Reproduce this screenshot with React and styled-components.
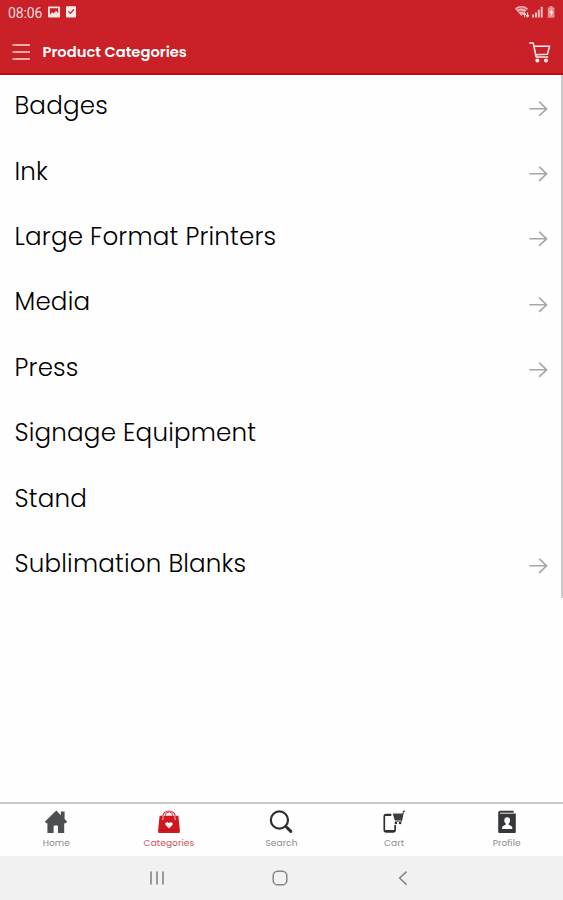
import React, { useState } from 'react'
import styled, { createGlobalStyle } from 'styled-components'

const categories = [
    { name: 'Badges', sub: true },
    { name: 'Ink', sub: true },
    { name: 'Large Format Printers', sub: true },
    { name: 'Media', sub: true },
    { name: 'Press', sub: true },
    { name: 'Signage Equipment', sub: false },
    { name: 'Stand', sub: false },
    { name: 'Sublimation Blanks', sub: true },
]

const pictureIcon = (
    <svg width="12" height="12" viewBox="0 0 12 12">
        <rect x="0" y="0.5" width="12" height="11" rx="1" fill="#fbe3e4"/>
        <path d="M1.8 2.3h8.4v5l-2.2-2.6-2.1 2.8-1.5-1.3-2.6 2.2z" fill="#c92127"/>
    </svg>
)

const checkIcon = (
    <svg width="10" height="12" viewBox="0 0 10 12">
        <rect x="0" y="0.2" width="10" height="11.4" rx="1" fill="#fdeeee"/>
        <path d="M2.4 5.4l2 2 3.4-3.9" fill="none" stroke="#c92127" strokeWidth="1.3"/>
    </svg>
)

const signalIcons = (
    <svg width="42" height="14" viewBox="0 0 42 14">
        <path d="M0.8 3.4c3.6-3.3 9.8-3.3 13.2 0L7.4 11z" fill="#f0b5b8"/>
        <path d="M2.6 4.8c2.8-2.3 6.8-2.3 9.6 0M4.6 7c1.7-1.3 3.9-1.3 5.6 0" fill="none" stroke="#c92127" strokeWidth="0.8"/>
        <path d="M10.6 12.2V8.4M9.2 9.6l1.4-1.6 1.4 1.6M13.6 7.6v4M12.2 10.4l1.4 1.6 1.4-1.6" fill="none" stroke="#fbe3e4" strokeWidth="1.1"/>
        <path d="M19 9.4v3M21.9 7.4v5M24.8 4.8v7.6M27.7 1.8v10.6" stroke="#f3bfc1" strokeWidth="2"/>
        <path d="M35.6 1h3v1.4h1.8v10.4h-6.6V2.4h1.8z" fill="#e88f93"/>
        <path d="M37.6 4l-2 4h1.4v3l2-4.2h-1.4z" fill="#fff"/>
    </svg>
)

const menuIcon = (
    <svg width="18" height="16" viewBox="0 0 18 16">
        <path d="M1 1h16.4M1 8h16.4M1 15h16.4" stroke="#fbd5d7" strokeWidth="1.5" strokeLinecap="round"/>
    </svg>
)

const basketIcon = (
    <svg width="22" height="21" viewBox="0 0 22 21" fill="none" stroke="#fdecec" strokeWidth="1.5" strokeLinecap="round" strokeLinejoin="round">
        <path d="M0.8 1h3.4l3 14h11.4M4.8 4.2h15.8l-2.2 8-11.6 0.5"/>
        <circle cx="8.4" cy="18.5" r="1.3" fill="#fdecec"/>
        <circle cx="17" cy="18.5" r="1.3" fill="#fdecec"/>
    </svg>
)

const arrow = (
    <svg width="19" height="16" viewBox="0 0 19 16" fill="none" stroke="#a6a6a6" strokeWidth="1.6" strokeLinecap="round" strokeLinejoin="round">
        <path d="M1 7.8h16.6M10.6 1.2L17.6 7.8l-7 6.6"/>
    </svg>
)

const home = (
    <svg width="24" height="24" viewBox="0 0 24 24" fill="#4c4f52">
        <path d="M12.3 0.6L1 11.6l1.2 1.6h1.2V23h6.2v-6.4a1 1 0 0 1 1-1h2.4a1 1 0 0 1 1 1V23h6.2v-9.8h1.8l1-1.6L20.6 9V1.6h-3.8v3.6z"/>
    </svg>
)

const bag = (
    <svg width="24" height="24" viewBox="0 0 24 24">
        <path d="M5.8 9V6a6.2 5 0 0 1 12.4 0v3" fill="none" stroke="#d43a41" strokeWidth="1.2"/>
        <path d="M8.4 7V5.4a3.6 3.4 0 0 1 7.2 0V7" fill="none" stroke="#d43a41" strokeWidth="1"/>
        <path d="M2.6 5.8h2.4v3.4a0.9 0.9 0 0 0 1.6 0V5.8h10.8v3.4a0.9 0.9 0 0 0 1.6 0V5.8h2.4l1.4 13.8v2.2c0 0.8-0.4 1.2-1.2 1.2H2.4c-0.8 0-1.2-0.4-1.2-1.2v-2.2z" fill="#cf1820"/>
        <path d="M12 18.4l-3.4-3.3c-1.3-2 1.7-4 3.4-1.8 1.7-2.2 4.7-0.2 3.4 1.8z" fill="#fff"/>
        <path d="M1.4 19.8h21.2" stroke="#aa1118" strokeWidth="0.6"/>
    </svg>
)

const search = (
    <svg width="24" height="24" viewBox="0 0 24 24" fill="none" stroke="#2d3134">
        <circle cx="10.4" cy="10" r="8.6" strokeWidth="2.2"/>
        <path d="M16.4 16.2l1.8 1.8" strokeWidth="2"/>
        <path d="M18 17.6l3.8 3.8" strokeWidth="3" strokeLinecap="round"/>
    </svg>
)

const cart = (
    <svg width="24" height="24" viewBox="0 0 24 24">
        <path d="M9.2 4.6H3.9C2.9 4.6 2.3 5.2 2.3 6.2v14c0 1 0.6 1.6 1.6 1.6h7.6c1 0 1.6-0.6 1.6-1.6V15" fill="none" stroke="#2f3235" strokeWidth="1.7"/>
        <path d="M2.6 5h6.6M2.6 21h10.4" stroke="#2f3235" strokeWidth="2.2"/>
        <path d="M10.8 3.4h10l-1.2 6.6h-7z" fill="#3c3f42"/>
        <path d="M23 1l-1.6 0.4-1.9 9.6h-6.6" fill="none" stroke="#2f3235" strokeWidth="1.1"/>
        <circle cx="13.9" cy="13" r="1.3" fill="#2f3235"/>
        <circle cx="18.1" cy="13" r="1.3" fill="#2f3235"/>
    </svg>
)

const profile = (
    <svg width="24" height="24" viewBox="0 0 24 24">
        <path d="M3.2 3.2C3.2 1.6 4 0.8 5.6 0.8h13v2.6h2.2V21.4c0 1-0.5 1.5-1.5 1.5H4.7c-1 0-1.5-0.5-1.5-1.5z" fill="#35383b"/>
        <path d="M5 3.2h13.6" stroke="#fff" strokeWidth="0.9"/>
        <path d="M12.2 7.2c2 0 3 1.4 2.9 3.2-0.1 1.4-0.6 2.4-1.4 3v1.2c0.3 1 3.3 1 3.6 2.8v1.6H7.1v-1.6c0.3-1.8 3.3-1.8 3.6-2.8v-1.2c-0.8-0.6-1.3-1.6-1.4-3-0.1-1.8 0.9-3.2 2.9-3.2z" fill="#fff"/>
    </svg>
)

const tabs = [
    { name: 'Home', icon: home },
    { name: 'Categories', icon: bag },
    { name: 'Search', icon: search },
    { name: 'Cart', icon: cart },
    { name: 'Profile', icon: profile },
]

function App() {
    const [active, setActive] = useState('Categories')

    return (
        <Screen>
            <GlobalStyle />
            <Header>
                <StatusBar>
                    <Clock>08:06</Clock>
                    {pictureIcon}
                    {checkIcon}
                    <StatusRight>{signalIcons}</StatusRight>
                </StatusBar>
                <TitleBar>
                    {menuIcon}
                    <Title>Product Categories</Title>
                    {basketIcon}
                </TitleBar>
            </Header>
            <Content>
                <List>
                    {categories.map(({ name, sub }) => (
                        <Row key={name}>
                            <Label>{name}</Label>
                            {sub && arrow}
                        </Row>
                    ))}
                </List>
            </Content>
            <TabBar>
                {tabs.map(({ name, icon }) => (
                    <Tab key={name} $active={active === name} onClick={() => setActive(name)}>
                        {icon}
                        <span>{name}</span>
                    </Tab>
                ))}
            </TabBar>
            <SystemBar>
                <svg width="16" height="16" viewBox="0 0 16 16">
                    <path d="M2 1.5v13M8 1.5v13M14 1.5v13" stroke="#9a9a9a" strokeWidth="2"/>
                </svg>
                <svg width="16" height="16" viewBox="0 0 16 16">
                    <rect x="1.2" y="1.2" width="13.6" height="13.6" rx="4.4" fill="none" stroke="#858585" strokeWidth="1.5"/>
                </svg>
                <svg width="16" height="16" viewBox="0 0 16 16">
                    <path d="M11.6 1.6L4.6 8l7 6.6" fill="none" stroke="#858585" strokeWidth="1.5"/>
                </svg>
            </SystemBar>
        </Screen>
    )
}

const GlobalStyle = createGlobalStyle`
    * {
        box-sizing: border-box;
    }
    body {
        margin: 0;
        background: #fefefe;
        font-family: Poppins, Inter, sans-serif;
    }
    svg {
        display: block;
        flex-shrink: 0;
    }
`;

const Screen = styled.div`
    height: 900px;
    display: flex;
    flex-direction: column;
    overflow: hidden;
`;

const Header = styled.header`
    height: 75px;
    background: #c92127;
    border-bottom: 2px solid #c00a0e;
    color: #fff;
`;

const StatusBar = styled.div`
    height: 24px;
    display: flex;
    align-items: center;
    gap: 6px;
    padding: 0 7px 0 8px;
`;

const Clock = styled.span`
    width: 34px;
    font-family: Roboto, sans-serif;
    font-size: 14px;
    letter-spacing: -0.1px;
    color: #fbdcdd;
    white-space: nowrap;
    padding-top: 1px;
`;

const StatusRight = styled.div`
    margin-left: auto;
`;

const TitleBar = styled.div`
    height: 49px;
    display: flex;
    align-items: center;
    padding: 7px 12px 0 12px;
`;

const Title = styled.h1`
    flex: 1;
    margin: 0 0 0 12.5px;
    font-size: 14.7px;
    font-weight: 600;
    line-height: 20px;
`;

const Content = styled.main`
    flex: 1;
    background: #fefefe;
`;

const List = styled.ul`
    margin: 0;
    padding: 0;
    list-style: none;
    border-right: 2px solid #cacaca;
`;

const Row = styled.li`
    height: 65.4px;
    display: flex;
    align-items: center;
    justify-content: space-between;
    padding: 2px 13px 0 14.5px;
`;

const Label = styled.span`
    font-size: 24.6px;
    font-weight: 300;
    line-height: 30px;
    letter-spacing: 0.18px;
    color: #000;
    padding-bottom: 5px;
    white-space: nowrap;
`;

const TabBar = styled.nav`
    height: 54px;
    display: flex;
    border-top: 2px solid #c9c9c9;
    background: #fefefe;
`;

const Tab = styled.button`
    flex: 1;
    display: flex;
    flex-direction: column;
    align-items: center;
    gap: 3px;
    padding: 6px 0 0;
    border: none;
    background: none;
    font: inherit;
    font-size: 9px;
    line-height: 12px;
    letter-spacing: 0.1px;
    color: ${props => props.$active ? '#d0505a' : '#8c8c8c'};
`;

const SystemBar = styled.footer`
    height: 44px;
    display: flex;
    align-items: center;
    justify-content: center;
    gap: 107px;
    padding-right: 3px;
    background: #f1f1f1;
`;

export default App
